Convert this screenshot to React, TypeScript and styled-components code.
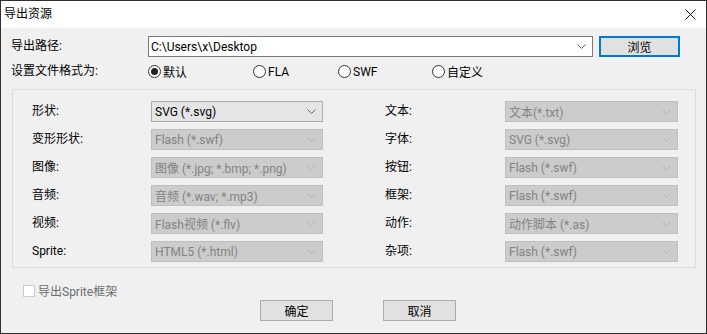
import styled, { createGlobalStyle } from "styled-components";

const GlobalStyle = createGlobalStyle`
  html, body {
    margin: 0;
    padding: 0;
    background: #ffffff;
  }
  body {
    font-family: Roboto, "Noto Sans CJK SC", sans-serif;
    font-size: 12px;
  }
`;

interface FormatRow {
  label: string;
  value: string;
  disabled?: boolean;
}

const leftRows: FormatRow[] = [
  { label: "形状:", value: "SVG (*.svg)" },
  { label: "变形形状:", value: "Flash (*.swf)", disabled: true },
  { label: "图像:", value: "图像 (*.jpg; *.bmp; *.png)", disabled: true },
  { label: "音频:", value: "音频 (*.wav; *.mp3)", disabled: true },
  { label: "视频:", value: "Flash视频 (*.flv)", disabled: true },
  { label: "Sprite:", value: "HTML5 (*.html)", disabled: true },
];

const rightRows: FormatRow[] = [
  { label: "文本:", value: "文本(*.txt)", disabled: true },
  { label: "字体:", value: "SVG (*.svg)", disabled: true },
  { label: "按钮:", value: "Flash (*.swf)", disabled: true },
  { label: "框架:", value: "Flash (*.swf)", disabled: true },
  { label: "动作:", value: "动作脚本 (*.as)", disabled: true },
  { label: "杂项:", value: "Flash (*.swf)", disabled: true },
];

const radios = [
  { label: "默认", width: 105, checked: true },
  { label: "FLA", width: 85 },
  { label: "SWF", width: 94 },
  { label: "自定义", width: 80 },
];

const Chevron = ({ color }: { color: string }) => (
  <svg width="9" height="5" viewBox="0 0 9 5">
    <path d="M0.5 0.5 L4.5 4.5 L8.5 0.5" fill="none" stroke={color} strokeWidth="1" />
  </svg>
);

const App = () => {
  return (
    <>
      <GlobalStyle />
      <Window>
        <TitleBar>
          <Title>导出资源</Title>
          <CloseButton>
            <svg width="11" height="11" viewBox="0 0 11 11">
              <path d="M0.5 0.5 L10.5 10.5 M10.5 0.5 L0.5 10.5" stroke="#111" strokeWidth="1" />
            </svg>
          </CloseButton>
        </TitleBar>
        <Body>
          <PathRow>
            <Label>导出路径:</Label>
            <PathCombo>
              <span>C:\Users\x\Desktop</span>
              <Chevron color="#606060" />
            </PathCombo>
            <BrowseButton>浏览</BrowseButton>
          </PathRow>
          <RadioRow>
            <FormatLabel>设置文件格式为:</FormatLabel>
            {radios.map((r) => (
              <RadioItem key={r.label} $width={r.width}>
                <RadioCircle $checked={!!r.checked} />
                <span>{r.label}</span>
              </RadioItem>
            ))}
          </RadioRow>
          <GroupBox>
            <FormatGrid>
              {leftRows.map((row, i) => (
                <FormatPair key={row.label} style={{ gridRow: i + 1 }}>
                  <Label>{row.label}</Label>
                  <Select $disabled={!!row.disabled}>
                    <span>{row.value}</span>
                    <Chevron color={row.disabled ? "#b4b4b4" : "#606060"} />
                  </Select>
                </FormatPair>
              ))}
              {rightRows.map((row, i) => (
                <FormatPair key={row.label} $right style={{ gridRow: i + 1 }}>
                  <Label>{row.label}</Label>
                  <Select $disabled={!!row.disabled}>
                    <span>{row.value}</span>
                    <Chevron color={row.disabled ? "#b4b4b4" : "#606060"} />
                  </Select>
                </FormatPair>
              ))}
            </FormatGrid>
          </GroupBox>
          <CheckRow>
            <CheckBox />
            <CheckText>导出Sprite框架</CheckText>
          </CheckRow>
          <ButtonRow>
            <DialogButton>确定</DialogButton>
            <DialogButton>取消</DialogButton>
          </ButtonRow>
        </Body>
      </Window>
    </>
  );
};
export default App;

const Window = styled.div`
  width: 707px;
  height: 334px;
  box-sizing: border-box;
  border: 1px solid #2f2f2f;
  background: #f0f0f0;
  display: flex;
  flex-direction: column;
  color: #000;
`;

const TitleBar = styled.div`
  height: 27px;
  background: #ffffff;
  display: flex;
  align-items: center;
  justify-content: space-between;
  padding: 0 10px 0 3px;
`;

const Title = styled.div`
  font-size: 12px;
  line-height: 14px;
  margin-top: -2px;
`;

const CloseButton = styled.div`
  width: 11px;
  height: 11px;
  display: flex;
  margin-top: -1px;
`;

const Body = styled.div`
  flex: 1;
  display: flex;
  flex-direction: column;
  padding: 8px 10px 0 10px;
`;

const Label = styled.div`
  font-size: 12px;
  line-height: 21px;
  white-space: nowrap;
`;

const PathRow = styled.div`
  display: grid;
  grid-template-columns: 137px 445px 87px;
  height: 21px;
`;

const PathCombo = styled.div`
  box-sizing: border-box;
  height: 21px;
  background: #ffffff;
  border: 1px solid #7a7a7a;
  display: flex;
  align-items: center;
  justify-content: space-between;
  padding: 0 6px 0 2px;
  font-size: 12px;
`;

const BrowseButton = styled.div`
  box-sizing: border-box;
  height: 21px;
  margin-left: 6px;
  background: #e1e1e1;
  border: 2px solid #0078d7;
  display: flex;
  align-items: center;
  justify-content: center;
  font-size: 12px;
`;

const RadioRow = styled.div`
  display: flex;
  align-items: center;
  height: 17px;
  margin-top: 6px;
`;

const FormatLabel = styled(Label)`
  width: 137px;
`;

const RadioItem = styled.div<{ $width: number }>`
  width: ${(p) => p.$width}px;
  display: flex;
  align-items: center;
  gap: 2px;
  font-size: 12px;
`;

const RadioCircle = styled.div<{ $checked: boolean }>`
  width: 13px;
  height: 13px;
  box-sizing: border-box;
  border: 1px solid #333;
  border-radius: 50%;
  background: #fff;
  display: flex;
  align-items: center;
  justify-content: center;
  &::after {
    content: "";
    display: ${(p) => (p.$checked ? "block" : "none")};
    width: 7px;
    height: 7px;
    border-radius: 50%;
    background: #222;
  }
`;

const GroupBox = styled.div`
  box-sizing: border-box;
  margin: 9px 0 0 1px;
  height: 179px;
  border: 1px solid #dcdcdc;
  padding: 11px 0 0 19px;
`;

const FormatGrid = styled.div`
  display: grid;
  grid-template-columns: 291px 293px;
  column-gap: 62px;
  row-gap: 7px;
  grid-auto-rows: 21px;
`;

const FormatPair = styled.div<{ $right?: boolean }>`
  grid-column: ${(p) => (p.$right ? 2 : 1)};
  display: grid;
  grid-template-columns: ${(p) => (p.$right ? "120px 173px" : "119px 172px")};
`;

const Select = styled.div<{ $disabled: boolean }>`
  box-sizing: border-box;
  height: 21px;
  background: ${(p) => (p.$disabled ? "#cccccc" : "#e5e5e5")};
  border: 1px solid ${(p) => (p.$disabled ? "#bfbfbf" : "#acacac")};
  color: ${(p) => (p.$disabled ? "#838383" : "#000")};
  display: flex;
  align-items: center;
  justify-content: space-between;
  padding: 0 6px 0 3px;
  font-size: 12px;
  white-space: nowrap;
`;

const CheckRow = styled.div`
  display: flex;
  align-items: center;
  gap: 3px;
  margin: 16px 0 0 12px;
  height: 13px;
`;

const CheckBox = styled.div`
  width: 12px;
  height: 12px;
  box-sizing: border-box;
  border: 1px solid #cccccc;
  background: #ffffff;
`;

const CheckText = styled.div`
  color: #6d6d6d;
  font-size: 12px;
`;

const ButtonRow = styled.div`
  display: flex;
  gap: 50px;
  margin: 3px 0 0 249px;
`;

const DialogButton = styled.div`
  box-sizing: border-box;
  width: 73px;
  height: 21px;
  background: #e1e1e1;
  border: 1px solid #adadad;
  display: flex;
  align-items: center;
  justify-content: center;
  font-size: 12px;
`;
